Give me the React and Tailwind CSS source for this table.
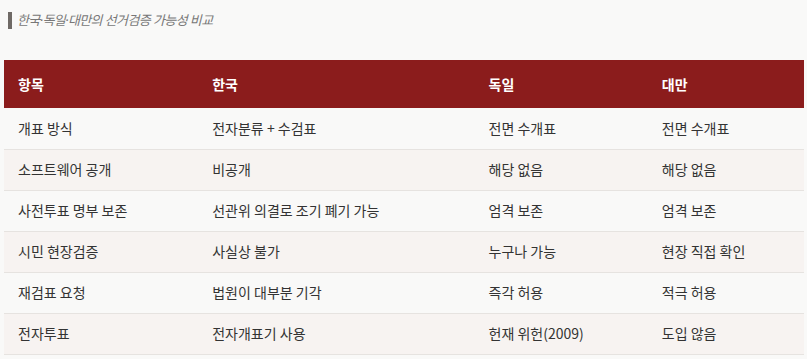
const rows = [
  ['개표 방식', '전자분류 + 수검표', '전면 수개표', '전면 수개표'],
  ['소프트웨어 공개', '비공개', '해당 없음', '해당 없음'],
  ['사전투표 명부 보존', '선관위 의결로 조기 폐기 가능', '엄격 보존', '엄격 보존'],
  ['시민 현장검증', '사실상 불가', '누구나 가능', '현장 직접 확인'],
  ['재검표 요청', '법원이 대부분 기각', '즉각 허용', '적극 허용'],
  ['전자투표', '전자개표기 사용', '헌재 위헌(2009)', '도입 않음'],
];

const widths = ['w-[194px]', 'w-[276px]', 'w-[173px]', 'w-[156px]'];

export default function App() {
  return (
    <div
      className="min-h-screen bg-[#f9f9f8] px-1 pt-[12px]"
      style={{ fontFamily: '"Noto Sans CJK KR", "Noto Sans", sans-serif' }}
    >
      <div
        className="ml-[4px] border-l-4 border-[#6f6a66] pl-[5px] text-[13px] leading-[17px] tracking-[-0.6px] italic text-[#777]"
        style={{ fontFamily: '"Noto Sans", "Noto Sans CJK KR", sans-serif' }}
      >
        한국·독일·대만의 선거검증 가능성 비교
      </div>

      <table className="mt-[31px] w-[800px] border-collapse text-[14px] text-[#333]">
        <thead>
          <tr className="h-[48px] bg-[#8b1c1c] text-left text-white">
            {['항목', '한국', '독일', '대만'].map((h, i) => (
              <th key={h} className={`${widths[i]} px-[14px] font-bold`}>
                {h}
              </th>
            ))}
          </tr>
        </thead>
        <tbody>
          {rows.map((r, i) => (
            <tr
              key={r[0]}
              className={`h-[41px] border-b border-[#e6e3e0] ${
                i % 2 === 1 ? 'bg-[#f7f3f1]' : 'bg-[#f9f9f8]'
              }`}
            >
              {r.map((c, j) => (
                <td key={j} className="px-[14px]">
                  {c}
                </td>
              ))}
            </tr>
          ))}
        </tbody>
      </table>
    </div>
  );
}
